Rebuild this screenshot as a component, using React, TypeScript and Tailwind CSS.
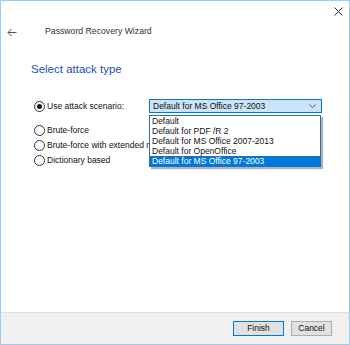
import React from "react";

const font = { fontFamily: '"Liberation Sans", Arial, sans-serif' };

function Radio({ checked }: { checked?: boolean }) {
  return (
    <span className="w-[11px] h-[11px] rounded-full border border-[#333] bg-white flex items-center justify-center shrink-0">
      {checked && <span className="w-[5px] h-[5px] rounded-full bg-[#1a1a1a]" />}
    </span>
  );
}

export default function App() {
  const items = [
    "Default",
    "Default for PDF /R 2",
    "Default for MS Office 2007-2013",
    "Default for OpenOffice",
    "Default for MS Office 97-2003",
  ];
  return (
    <div
      style={font}
      className="w-[350px] h-[345px] border border-[#9ccbf3] bg-white flex flex-col text-[8.5px] text-[#111]"
    >
      <div className="h-[20px] flex justify-end items-center pr-[6px] shrink-0">
        <svg width="9" height="9" viewBox="0 0 9 9">
          <path d="M0.5 0.5 L8.5 8.5 M8.5 0.5 L0.5 8.5" stroke="#333" strokeWidth="1" />
        </svg>
      </div>
      <div className="h-[22px] flex items-center shrink-0">
        <svg className="ml-[6px]" width="10" height="9" viewBox="0 0 10 9">
          <path d="M9.5 4.5 H1 M4.5 1 L1 4.5 L4.5 8" stroke="#555" strokeWidth="1" fill="none" />
        </svg>
        <span className="ml-[28px] text-[8.7px] text-[#333]">Password Recovery Wizard</span>
      </div>
      <div className="mt-[18px] pl-[30px] h-[16px] leading-[16px] text-[11.5px] text-[#1f4fb5] shrink-0">
        Select attack type
      </div>
      <div className="mt-[22px] pl-[33px] flex flex-col shrink-0">
        <div className="h-[14px] flex items-center">
          <div className="w-[115px] flex items-center gap-[2px]">
            <Radio checked />
            <span>Use attack scenario:</span>
          </div>
          <div className="relative w-[173px] h-[14px]">
            <div className="w-full h-full border border-[#0078d7] bg-[#cce4f7] flex items-center justify-between pl-[3px] pr-[5px]">
              <span>Default for MS Office 97-2003</span>
              <svg width="7" height="4" viewBox="0 0 7 4">
                <path d="M0.5 0.5 L3.5 3.5 L6.5 0.5" stroke="#555" strokeWidth="1" fill="none" />
              </svg>
            </div>
            <div className="absolute left-0 top-[16px] w-[172px] border border-[#2c6cb0] bg-white shadow-[2px_2px_1px_rgba(0,0,0,0.3)] z-10">
              {items.map((t, i) => (
                <div
                  key={t}
                  className={
                    i === items.length - 1
                      ? "h-[10px] leading-[10px] pl-[2px] bg-[#0078d7] text-white"
                      : "h-[10px] leading-[10px] pl-[2px]"
                  }
                >
                  {t}
                </div>
              ))}
            </div>
          </div>
        </div>
        <div className="mt-[11px] h-[12px] flex items-center gap-[2px]">
          <Radio />
          <span>Brute-force</span>
        </div>
        <div className="mt-[3px] h-[12px] flex items-center gap-[2px] whitespace-nowrap">
          <Radio />
          <span>Brute-force with extended mask</span>
        </div>
        <div className="mt-[3px] h-[12px] flex items-center gap-[2px]">
          <Radio />
          <span>Dictionary based</span>
        </div>
      </div>
      <div className="mt-auto h-[32px] border-t border-[#dfdfdf] bg-[#f0f0f0] flex items-center justify-end gap-[7px] pr-[17px] shrink-0">
        <button className="w-[51px] h-[15px] border border-[#0078d7] bg-[#e1e1e1] text-[8.5px] leading-none flex items-center justify-center">
          Finish
        </button>
        <button className="w-[41px] h-[15px] border border-[#adadad] bg-[#e1e1e1] text-[8.5px] leading-none flex items-center justify-center">
          Cancel
        </button>
      </div>
    </div>
  );
}
